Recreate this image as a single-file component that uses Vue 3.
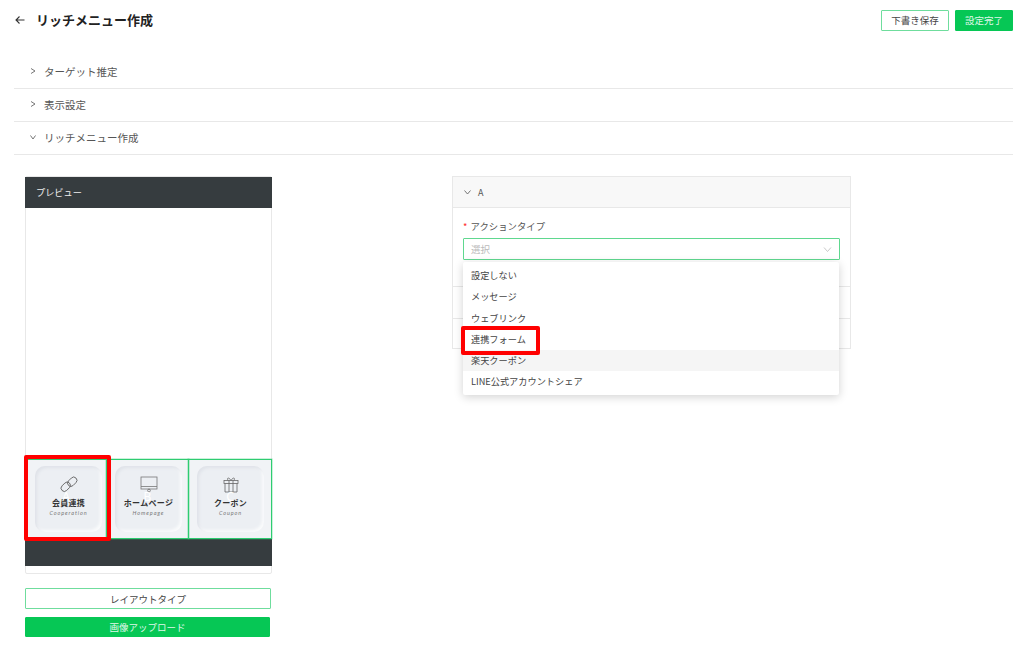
<script setup>
const sections = [
  { label: 'ターゲット推定', open: false },
  { label: '表示設定', open: false },
  { label: 'リッチメニュー作成', open: true },
]
const options = ['設定しない', 'メッセージ', 'ウェブリンク', '連携フォーム', '楽天クーポン', 'LINE公式アカウントシェア']
</script>

<template>
  <div class="page">
    <header class="top">
      <div class="title-wrap">
        <svg class="back" width="10" height="10" viewBox="0 0 10 10"><path d="M9.500 5H1M4.500 1.500 1 5l3.500 3.500" fill="none" stroke="#333" stroke-width="1.100"/></svg>
        <h1>リッチメニュー作成</h1>
      </div>
      <div class="top-btns">
        <button class="btn-o small">下書き保存</button>
        <button class="btn-g small">設定完了</button>
      </div>
    </header>

    <section class="acc">
      <div v-for="s in sections" :key="s.label" class="acc-row">
        <svg v-if="!s.open" width="6" height="8" viewBox="0 0 6 8"><path d="M1 1.500 5 4 1 6.500" fill="none" stroke="#666" stroke-width="0.900"/></svg>
        <svg v-else width="6" height="8" viewBox="0 0 6 8"><path d="M.5 2.500 3 6l2.500-3.500" fill="none" stroke="#666" stroke-width="0.900"/></svg>
        <span>{{ s.label }}</span>
      </div>
    </section>

    <main class="body">
      <div class="left">
        <div class="phone">
          <div class="phone-head">プレビュー</div>
          <div class="phone-blank"></div>
          <div class="menu">
            <div class="cell cell-a">
              <div class="tile">
                <svg width="18" height="17" viewBox="0 0 18 17" fill="none" stroke="#666" stroke-width="0.900">
                  <rect x="0.500" y="7.500" width="10.500" height="6.500" rx="3.250" transform="rotate(-45 5.750 10.750)"/>
                  <rect x="7" y="2.500" width="10.500" height="6.500" rx="3.250" transform="rotate(-45 12.250 5.750)"/>
                </svg>
                <b>会員連携</b>
                <i>Cooperation</i>
              </div>
              <span class="mark">A</span>
            </div>
            <div class="cell">
              <div class="tile">
                <svg width="18" height="17" viewBox="0 0 18 17" fill="none" stroke="#777" stroke-width="0.800">
                  <rect x="1" y="1" width="16" height="12"/>
                  <path d="M1 10.500h16M9 13v1"/>
                  <circle cx="9" cy="14.500" r="1.400"/>
                </svg>
                <b>ホームページ</b>
                <i>Homepage</i>
              </div>
              <span class="mark">B</span>
            </div>
            <div class="cell">
              <div class="tile">
                <svg width="18" height="17" viewBox="0 0 18 17" fill="none" stroke="#666" stroke-width="0.800">
                  <rect x="2" y="4.500" width="14" height="3"/>
                  <path d="M3 7.500V16h12V7.500M7 4.500V16M11 4.500V16M9 4.500C7 1 4.500 1.500 6 4.500M9 4.500c2-3.500 4.500-3 3 0"/>
                </svg>
                <b>クーポン</b>
                <i>Coupon</i>
              </div>
              <span class="mark">C</span>
            </div>
            <div class="red-box"></div>
          </div>
          <div class="phone-foot"></div>
        </div>
        <button class="btn-o wide">レイアウトタイプ</button>
        <button class="btn-g wide upload">画像アップロード</button>
      </div>

      <div class="right">
        <div class="panel">
          <div class="panel-head">
            <svg width="7" height="8" viewBox="0 0 7 8"><path d="M.5 2.500 3.500 6l3-3.500" fill="none" stroke="#666" stroke-width="0.900"/></svg>
            <span>A</span>
          </div>
          <div class="panel-body">
            <label class="field-label"><em>*</em> アクションタイプ</label>
            <div class="select">
              <span>選択</span>
              <svg width="9" height="9" viewBox="0 0 9 9"><path d="M1 2.500l3.500 4 3.500-4" fill="none" stroke="#bbb" stroke-width="0.800"/></svg>
            </div>
          </div>
          <div class="panel-row"></div>
          <div class="panel-row"></div>

          <div class="dropdown">
            <div v-for="o in options" :key="o" class="opt" :class="{ hover: o === '楽天クーポン' }">{{ o }}</div>
            <div class="red-option"></div>
          </div>
        </div>
      </div>
    </main>
  </div>
</template>

<style>
html, body { margin: 0; background: #fff; }
</style>

<style scoped>
.page {
  width: 1024px;
  height: 652px;
  overflow: hidden;
  box-sizing: border-box;
  padding: 0 11px 0 14px;
  font-family: "Noto Sans CJK JP", "Noto Sans", sans-serif;
  color: #333;
}
button { font-family: inherit; cursor: pointer; padding: 0; box-sizing: border-box; }
.top { display: flex; justify-content: space-between; align-items: flex-start; height: 56px; }
.title-wrap { display: flex; align-items: center; gap: 11px; padding-top: 10px; height: 20px; }
.back { flex: none; margin-left: 1px; }
h1 { margin: 0; font-size: 13px; font-weight: 700; color: #222; line-height: 20px; }
.top-btns { display: flex; gap: 6px; padding-top: 10px; }
.btn-o { background: #fff; border: 1px solid #6fdd9d; color: #444; border-radius: 1px; }
.btn-g { background: #06c755; border: 1px solid #06c755; color: #dff7e8; border-radius: 1px; }
.small { height: 21px; font-size: 9.500px; line-height: 1; }
.btn-o.small { width: 68px; }
.btn-g.small { width: 58px; }
.acc-row {
  height: 30px;
  padding-bottom: 2px;
  border-bottom: 1px solid #e8e8e8;
  display: flex;
  align-items: center;
  gap: 8px;
  padding-left: 16px;
  font-size: 10.500px;
  color: #555;
}
.body { display: flex; padding-top: 21px; }
.left { width: 247px; margin-left: 11px; flex: none; }
.phone {
  border: 1px solid #e8e8e8;
  border-radius: 2px;
  height: 398px;
  box-sizing: border-box;
  display: flex;
  flex-direction: column;
  margin-bottom: 14px;
}
.phone-head {
  height: 31px;
  background: #363c3f;
  color: #eee;
  font-size: 9.200px;
  line-height: 30px;
  padding-left: 11px;
  margin: 0 -1px;
  flex: none;
}
.phone-blank { height: 251px; flex: none; }
.menu {
  display: grid;
  grid-template-columns: 82px 82px 83px;
  height: 80px;
  position: relative;
  flex: none;
  margin: 0 -1px;
  background: #f1f3f6;
}
.cell {
  position: relative;
  border: 1px solid #2ecc71;
  box-shadow: 0 0 0 0.500px rgba(46, 204, 113, 0.5);
  box-sizing: border-box;
  margin-left: -1px;
  padding-left: 8px;
  display: flex;
  align-items: center;
}
.cell-a { margin-left: 0; padding-left: 9px; }
.tile {
  width: 67px;
  height: 66px;
  border-radius: 10px;
  background: #eceff3;
  box-shadow: inset 2px 2px 3px #e0e3e9, inset -2px -2px 3px #fafbfc;
  display: flex;
  flex-direction: column;
  align-items: center;
  padding-top: 10px;
  box-sizing: border-box;
}
.tile svg { flex: none; }
.tile b { font-size: 8px; font-weight: 700; color: #333; margin-top: 4px; line-height: 11px; white-space: nowrap; letter-spacing: 0.3px; }
.tile i { font-size: 5.500px; color: #777; letter-spacing: 0.9px; margin-top: 2px; line-height: 7px; font-family: "Lato", sans-serif; }
.mark {
  position: absolute;
  left: 0;
  right: 0;
  top: 30px;
  text-align: center;
  font-size: 12px;
  line-height: 14px;
  color: #fff;
  font-family: "Noto Sans", sans-serif;
}
.red-box {
  position: absolute;
  left: -1px;
  top: -4px;
  width: 87px;
  height: 86px;
  border: 4px solid #f00;
  border-radius: 2px;
  box-sizing: border-box;
}
.phone-foot { height: 27px; background: #363c3f; flex: none; margin: 0 -1px; }
.wide { display: block; font-size: 9.500px; }
.wide.btn-o { width: 246px; height: 21px; margin-bottom: 8px; }
.upload { width: 245px; height: 20px; }
.right { margin-left: 180px; width: 399px; flex: none; }
.panel { border: 1px solid #e8e8e8; position: relative; height: 173px; box-sizing: border-box; }
.panel-head {
  height: 30px;
  background: #f8f8f8;
  border-bottom: 1px solid #e8e8e8;
  display: flex;
  align-items: center;
  gap: 7px;
  padding-left: 11px;
  font-size: 9px;
  color: #555;
}
.panel-body { padding: 10px 10px 0 10px; height: 78px; box-sizing: border-box; }
.field-label { display: block; font-size: 9.400px; line-height: 16px; color: #555; margin-bottom: 4px; }
.field-label em { color: #f33; font-style: normal; margin-right: 1px; }
.select {
  height: 22px;
  border: 1px solid #5fd88f;
  box-sizing: border-box;
  border-radius: 1px;
  display: flex;
  align-items: center;
  justify-content: space-between;
  padding: 0 7px;
  font-size: 9.500px;
  color: #bbb;
}
.panel-row { height: 32px; border-top: 1px solid #e8e8e8; box-sizing: border-box; }
.dropdown {
  position: absolute;
  left: 10px;
  top: 85px;
  width: 376px;
  padding-top: 3px;
  background: #fff;
  border-radius: 2px;
  box-shadow: 0 2px 10px rgba(0,0,0,.18);
  height: 133px;
  box-sizing: border-box;
}
.opt { height: 21.300px; line-height: 21px; padding-left: 8px; font-size: 9.200px; color: #444; }
.opt.hover { background: #f5f5f5; }
.red-option {
  position: absolute;
  left: -2px;
  top: 64px;
  width: 79px;
  height: 29px;
  border: 4px solid #f00;
  border-radius: 2px;
  box-sizing: border-box;
}
</style>
